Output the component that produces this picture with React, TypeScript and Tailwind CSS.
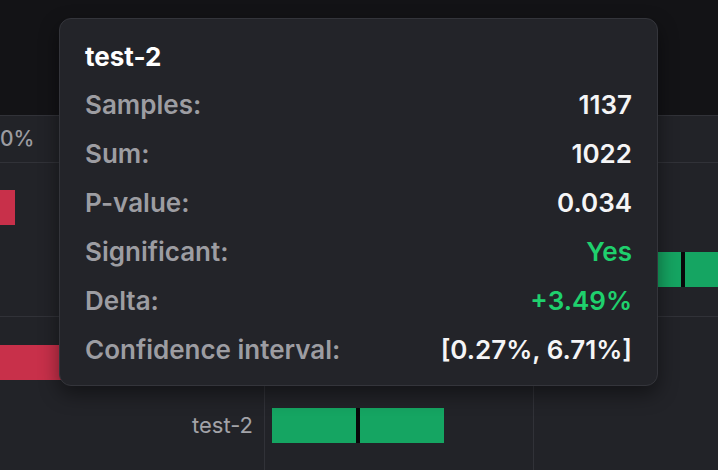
export default function App() {
  const rows = [
    { label: "Samples:", value: "1137", tone: "text-[#f5f5f6]" },
    { label: "Sum:", value: "1022", tone: "text-[#f5f5f6]" },
    { label: "P-value:", value: "0.034", tone: "text-[#f5f5f6]" },
    { label: "Significant:", value: "Yes", tone: "text-[#1fd06d]" },
    { label: "Delta:", value: "+3.49%", tone: "text-[#1fd06d]" },
    {
      label: "Confidence interval:",
      value: "[0.27%, 6.71%]",
      tone: "text-[#f5f5f6]",
    },
  ];

  return (
    <div
      className="relative w-[718px] h-[470px] overflow-hidden bg-[#131316] flex flex-col"
      style={{ fontFamily: "Inter, 'Noto Sans', sans-serif" }}
    >
      {/* top strip */}
      <div className="h-[115px] shrink-0"></div>

      {/* results panel */}
      <div className="flex-1 flex flex-col border-t border-[#313238] bg-[#222328]">
        {/* header row */}
        <div className="h-[47px] shrink-0 border-b border-[#313238] grid grid-cols-[264px_269px_1fr]">
          <div className="flex items-center text-[21px] font-medium text-[#9c9ca1]">
            0%
          </div>
          <div className="border-l border-[#313238]"></div>
          <div className="border-l border-[#313238]"></div>
        </div>

        {/* group 1 */}
        <div className="h-[154px] shrink-0 border-b border-[#313238] grid grid-cols-[264px_269px_1fr]">
          <div className="flex flex-col gap-[27px] pt-[27px]">
            <div className="h-[35px] flex">
              <div className="w-[15px] h-full bg-[#c8304a]"></div>
            </div>
            <div className="h-[35px]"></div>
          </div>
          <div className="border-l border-[#313238]"></div>
          <div className="border-l border-[#313238] flex flex-col gap-[27px] pt-[27px]">
            <div className="h-[35px]"></div>
            <div className="h-[35px] flex pl-[20px]">
              <div className="w-[127px] h-full bg-[#15a562]"></div>
              <div className="w-[4px] h-full bg-[#08080a]"></div>
              <div className="w-[120px] h-full bg-[#15a562]"></div>
            </div>
          </div>
        </div>

        {/* group 2 */}
        <div className="flex-1 grid grid-cols-[264px_269px_1fr]">
          <div className="flex flex-col gap-[28px] pt-[28px]">
            <div className="h-[35px] flex">
              <div className="w-[140px] h-full bg-[#c8304a]"></div>
            </div>
            <div className="h-[35px] flex items-center justify-end pr-[11px] text-[22px] text-[#a3a3a8]">
              test-2
            </div>
          </div>
          <div className="border-l border-[#313238] flex flex-col gap-[28px] pt-[28px]">
            <div className="h-[35px]"></div>
            <div className="h-[35px] flex pl-[7px]">
              <div className="w-[84px] h-full bg-[#15a562]"></div>
              <div className="w-[4px] h-full bg-[#08080a]"></div>
              <div className="w-[84px] h-full bg-[#15a562]"></div>
            </div>
          </div>
          <div className="border-l border-[#313238]"></div>
        </div>
      </div>

      {/* tooltip */}
      <div className="absolute left-[59px] top-[18px] w-[599px] h-[368px] rounded-[12px] border border-[#34353b] bg-[#232429] shadow-[0_8px_20px_rgba(0,0,0,0.45)] px-[25px] pt-[22px]">
        <div className="text-[26px] leading-[32px] font-bold text-white">
          test-2
        </div>
        <div className="mt-[7px] flex flex-col">
          {rows.map((row) => (
            <div
              key={row.label}
              className="h-[49px] flex items-center justify-between text-[26px] font-semibold"
            >
              <span className="text-[#9d9da2]">{row.label}</span>
              <span className={row.tone}>{row.value}</span>
            </div>
          ))}
        </div>
      </div>
    </div>
  );
}
